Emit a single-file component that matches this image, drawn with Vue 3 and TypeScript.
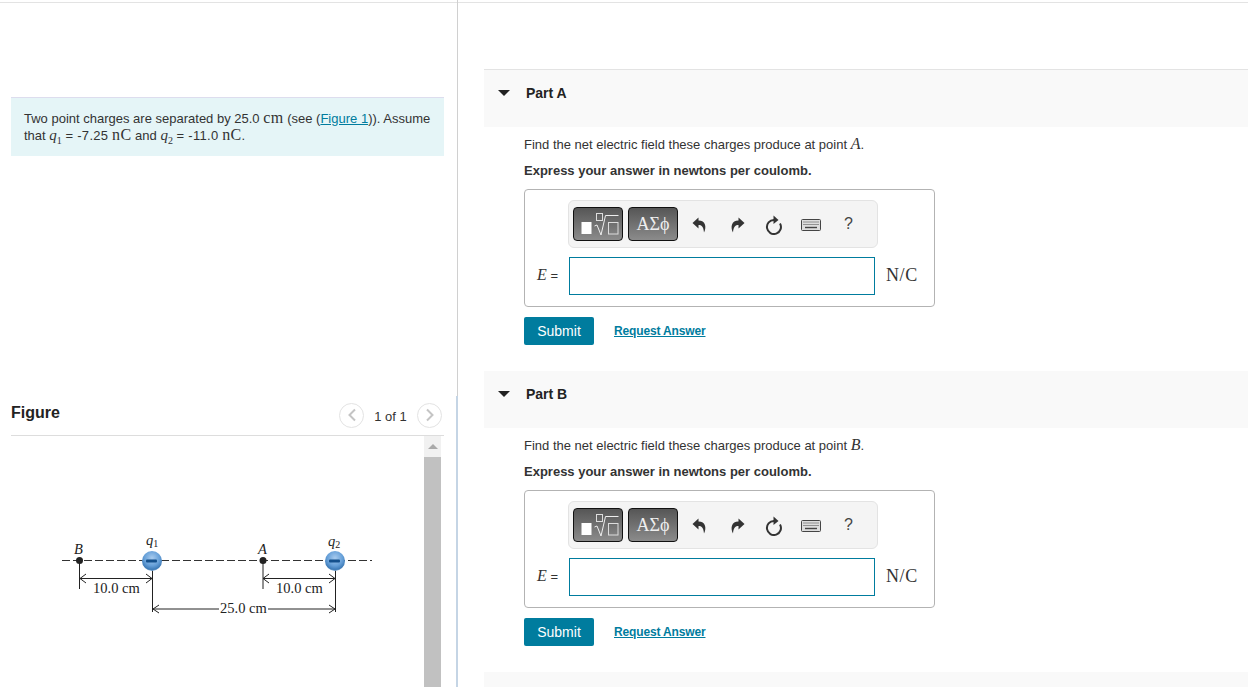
<script setup lang="ts">
const parts = [
  { name: 'Part A', point: 'A' },
  { name: 'Part B', point: 'B' },
]
</script>

<template>
  <div class="page">
    <div class="left">
      <div class="intro">
        Two point charges are separated by 25.0 <span class="cm">cm</span> (see (<a class="fig-link">Figure 1</a>)). Assume<br />
        that <i class="mv">q</i><sub>1</sub> <span class="eq">= -7.25</span> <span class="cm">nC</span> and <i class="mv">q</i><sub>2</sub> <span class="eq">= -11.0</span> <span class="cm">nC</span>.
      </div>
      <div class="fig-head">
        <span class="fig-title">Figure</span>
        <div class="pager">
          <span class="circle">
            <svg width="10" height="14" viewBox="0 0 10 14"><path d="M8 1.500 2.500 7 8 12.500" fill="none" stroke="#c4c4c4" stroke-width="2" /></svg>
          </span>
          <span class="pager-text">1 of 1</span>
          <span class="circle">
            <svg width="10" height="14" viewBox="0 0 10 14"><path d="M2 1.500 7.500 7 2 12.500" fill="none" stroke="#c4c4c4" stroke-width="2" /></svg>
          </span>
        </div>
      </div>
      <div class="fig-pane">
        <svg class="diagram" width="413" height="251" viewBox="11 436 413 251">
          <defs>
            <radialGradient id="ball" cx="50%" cy="35%" r="65%">
              <stop offset="0%" stop-color="#a8cbee" />
              <stop offset="60%" stop-color="#659fd8" />
              <stop offset="88%" stop-color="#3f7cb8" />
              <stop offset="100%" stop-color="#7fa8d0" />
            </radialGradient>
          </defs>
          <line x1="62" y1="560.5" x2="372" y2="560.5" stroke="#333" stroke-width="1" stroke-dasharray="8 3" />
          <g stroke="#222" stroke-width="1" fill="none">
            <path d="M79.500 560V589M152.500 570V612M263 560V589M335.500 570V612" />
            <path d="M80 578.500H152M86 574 80 578.500 86 583M146 574 152 578.500 146 583" />
            <path d="M263 578.500H335M269 574 263 578.500 269 583M329 574 335 578.500 329 583" />
            <path d="M153 609H219M268 609H335M159 605 153 609 159 613M329 605 335 609 329 613" />
          </g>
          <circle cx="79.500" cy="560.500" r="3.500" fill="#222" />
          <circle cx="263" cy="560.500" r="3.500" fill="#222" />
          <g>
            <circle cx="152" cy="561" r="10" fill="url(#ball)" />
            <rect x="146" y="559.500" width="11" height="3" rx="1" fill="#14508c" />
            <circle cx="335" cy="561" r="10" fill="url(#ball)" />
            <rect x="329" y="559.500" width="11" height="3" rx="1" fill="#14508c" />
          </g>
          <g class="dlabel">
            <text x="74" y="554" class="it">B</text>
            <text x="146" y="545" class="it">q<tspan class="s" dy="2">1</tspan></text>
            <text x="258" y="554" class="it">A</text>
            <text x="328" y="546" class="it">q<tspan class="s" dy="2">2</tspan></text>
            <text x="93" y="593">10.0 cm</text>
            <text x="276" y="593">10.0 cm</text>
            <text x="220" y="613">25.0 cm</text>
          </g>
        </svg>
        <div class="scrollbar">
          <div class="sb-up"><span class="sb-arrow"></span></div>
          <div class="sb-thumb"></div>
        </div>
      </div>
    </div>

    <div class="right">
      <section v-for="p in parts" :key="p.name" class="part">
        <header class="part-head">
          <span class="caret"></span>
          <span class="part-name">{{ p.name }}</span>
        </header>
        <div class="part-body">
          <p class="q">Find the net electric field these charges produce at point <i class="mv big">{{ p.point }}</i>.</p>
          <p class="ex">Express your answer in newtons per coulomb.</p>
          <div class="answer">
            <div class="toolbar">
              <button class="tb tb1">
                <svg width="46" height="28" viewBox="0 0 46 28">
                  <rect x="6.500" y="12" width="10" height="12" fill="#fff" />
                  <rect x="21.500" y="3.500" width="6" height="7" fill="none" stroke="#ddd" />
                  <path d="M19.500 16 22 15 26 25 30.500 5.500H43.500" fill="none" stroke="#eee" />
                  <rect x="33.500" y="12.500" width="9.500" height="11.500" fill="none" stroke="#ddd" />
                </svg>
              </button>
              <button class="tb tb2">ΑΣϕ</button>
              <span class="ic">
                <svg width="16" height="16" viewBox="0 0 16 16"><path d="M6.500 .5 .5 6 6.500 11.500V8C9.500 8 11.500 9.500 12 15.500 14.800 10 13.500 3.500 6.500 3.500Z" fill="#333" /></svg>
              </span>
              <span class="ic">
                <svg width="16" height="16" viewBox="0 0 16 16"><path d="M9.500 .5 15.500 6 9.500 11.500V8C6.500 8 4.500 9.500 4 15.500 1.200 10 2.500 3.500 9.500 3.500Z" fill="#333" /></svg>
              </span>
              <span class="ic">
                <svg width="18" height="20" viewBox="0 0 18 20"><path d="M15 8.500A7 7 0 1 1 9 5" fill="none" stroke="#333" stroke-width="2" /><path d="M8.500 .5 13.500 5 8.500 9Z" fill="#333" /></svg>
              </span>
              <span class="ic">
                <svg width="20" height="12" viewBox="0 0 20 12">
                  <rect x=".5" y=".5" width="19" height="11" rx="1" fill="#ddd" stroke="#444" />
                  <path d="M2.500 3H17.500M2.500 5.500H17.500" stroke="#444" stroke-width="1.200" stroke-dasharray="1 1" />
                  <path d="M4 8.500H16" stroke="#444" stroke-width="1.400" />
                </svg>
              </span>
              <span class="ic help">?</span>
            </div>
            <div class="answer-row">
              <span class="lhs"><i class="mv big">E</i> =</span>
              <div class="field"></div>
              <span class="unit">N/C</span>
            </div>
          </div>
          <div class="actions">
            <button class="submit">Submit</button>
            <a class="req">Request Answer</a>
          </div>
        </div>
      </section>
      <div class="part-head next"></div>
    </div>
  </div>
</template>

<style>
html, body { margin: 0; padding: 0; background: #fff; overflow: hidden; }
</style>

<style scoped>
.page {
  display: flex;
  width: 1248px;
  height: 687px;
  overflow: hidden;
  box-sizing: border-box;
  font-family: "Liberation Sans", Arial, sans-serif;
  font-size: 13px;
  color: #333;
  background: linear-gradient(#fff 2px, #e3e3e3 2px, #e3e3e3 3px, #fff 3px);
}
.left {
  position: relative;
  width: 458px;
  flex: none;
  box-sizing: border-box;
  padding: 97px 13px 0 11px;
  border-right: 1px solid #d0d0d0;
  display: flex;
  flex-direction: column;
}
.left::after {
  content: "";
  position: absolute;
  right: -1px;
  top: 396px;
  bottom: 0;
  width: 2px;
  background: #c5d5e5;
}
.intro {
  width: 433px;
  box-sizing: border-box;
  height: 59px;
  background: #e5f5f7;
  border-top: 1px solid #dde;
  padding: 12px 13px 0;
  line-height: 16px;
  font-size: 13px;
  white-space: nowrap;
}
.intro sub { font-size: 10px; line-height: 0; font-family: "Liberation Serif", serif; font-style: normal; }
.eq { letter-spacing: .3px; }
.mv { font-family: "Liberation Serif", serif; font-style: italic; font-size: 15px; }
.big { font-size: 16px; }
.cm { font-family: "Liberation Serif", serif; font-size: 16px; letter-spacing: .4px; }
.fig-link { color: #007c9e; text-decoration: underline; }
.fig-head {
  margin-top: 239px;
  height: 41px;
  width: 433px;
  border-bottom: 1px solid #ddd;
  display: flex;
  justify-content: space-between;
  align-items: center;
  box-sizing: border-box;
}
.fig-title { font-weight: 700; font-size: 16px; color: #222; margin-top: -5px; }
.pager { display: flex; align-items: center; margin-right: 2px; }
.circle {
  width: 23px;
  height: 23px;
  border: 1px solid #e3e3e3;
  border-radius: 50%;
  display: flex;
  align-items: center;
  justify-content: center;
}
.pager-text { width: 53px; text-align: center; font-size: 13px; color: #333; margin-top: 2px; }
.fig-pane { display: flex; flex: 1; width: 430px; min-height: 0; }
.diagram { flex: none; display: block; }
.dlabel text { font-family: "Liberation Serif", serif; font-size: 14.5px; fill: #222; }
.dlabel .it { font-style: italic; }
.dlabel .s { font-size: 10px; font-style: normal; }
.scrollbar { width: 17px; background: #f1f1f1; flex: none; }
.sb-up { height: 21px; display: flex; justify-content: center; align-items: center; }
.sb-arrow { width: 0; height: 0; border-left: 5px solid transparent; border-right: 5px solid transparent; border-bottom: 5px solid #aaa; }
.sb-thumb { height: 230px; background: #c1c1c1; }
.right {
  flex: 1;
  min-width: 0;
  padding: 69px 0 0 26px;
  box-sizing: border-box;
}
.part { height: 302px; }
.part + .part { height: 301px; }
.part-head {
  height: 58px;
  box-sizing: border-box;
  background: #f9f9f9;
  border-top: 1px solid #e3e3e3;
  display: flex;
  align-items: center;
}
.part + .part .part-head { border-top: 0; height: 57px; }
.part-head.next { border-top: 0; height: 20px; }
.caret {
  width: 0;
  height: 0;
  margin-left: 14px;
  border-left: 6px solid transparent;
  border-right: 6px solid transparent;
  border-top: 6px solid #222;
  margin-top: -12px;
}
.part-name { margin-left: 16px; font-weight: 700; color: #222; margin-top: -12px; font-size: 14px; }
.part-body { padding-left: 40px; }
.q { margin: 0; padding-top: 8px; line-height: 18px; height: 18px; }
.ex { margin: 9px 0 0; font-weight: 700; line-height: 18px; }
.answer {
  margin-top: 9px;
  width: 411px;
  height: 118px;
  box-sizing: border-box;
  border: 1px solid #b3b3b3;
  border-radius: 4px;
  padding: 10px 0 0 12px;
}
.toolbar {
  margin-left: 31px;
  width: 310px;
  height: 48px;
  box-sizing: border-box;
  background: #f4f4f4;
  border: 1px solid #e3e3e3;
  border-radius: 6px;
  display: flex;
  align-items: center;
  padding-left: 4px;
}
.tb {
  box-sizing: border-box;
  height: 34px;
  padding: 0;
  border: 1px solid #111;
  border-radius: 4px;
  background: linear-gradient(#565656, #8b8b8b);
  color: #eee;
  display: flex;
  align-items: center;
  justify-content: center;
}
.tb1 { width: 50px; }
.tb2 { width: 50px; margin-left: 5px; font-family: "Liberation Serif", serif; font-size: 18px; }
.ic { width: 37px; display: flex; justify-content: center; align-items: center; padding-top: 2px; }
.ic:nth-child(3) { margin-left: 3px; }
.help { font-size: 16px; color: #444; padding-top: 0; margin-left: 1px; }
.answer-row { display: flex; align-items: center; margin-top: 9px; }
.lhs { width: 32px; white-space: nowrap; font-size: 13px; margin-top: -2px; }
.field {
  width: 306px;
  height: 38px;
  box-sizing: border-box;
  border: 1px solid #007c9e;
  background: #fff;
}
.unit { margin-left: 11px; font-family: "Liberation Serif", serif; font-size: 18px; color: #333; letter-spacing: .6px; margin-top: -2px; }
.actions { display: flex; align-items: center; margin-top: 10px; }
.submit {
  width: 70px;
  height: 28px;
  border: 0;
  border-radius: 2px;
  padding: 0;
  background: #007c9e;
  color: #fff;
  font-family: "Liberation Sans", Arial, sans-serif;
  font-size: 14px;
}
.req { margin-left: 20px; color: #007c9e; font-weight: 700; font-size: 12px; letter-spacing: -.15px; text-decoration: underline; }
</style>
